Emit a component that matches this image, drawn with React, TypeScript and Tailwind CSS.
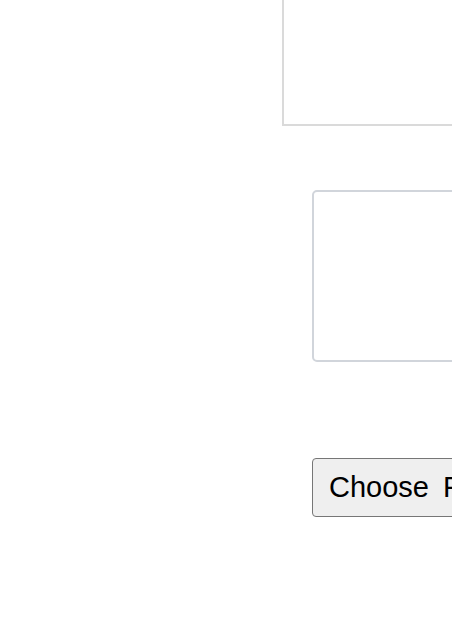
export default function App() {
  return (
    <div className="w-[452px] h-[644px] overflow-hidden bg-white font-['Liberation_Sans',Arial,sans-serif]">
      {/* Preview frame */}
      <div className="ml-[282px] mt-[-20px] w-[300px] h-[146px] border-2 border-[#dadada]" />

      {/* Text area */}
      <div className="ml-[312px] mt-[64px] w-[300px] h-[172px] rounded-[5px] border-2 border-[#d1d5db]" />

      {/* File input */}
      <div className="ml-[312px] mt-[96px] w-[300px]">
        <button className="h-[59px] px-[16px] rounded-[4px] border border-[#767676] bg-[#efefef] text-[29px] leading-none text-black whitespace-nowrap [word-spacing:6px]">
          Choose File
        </button>
      </div>
    </div>
  );
}
